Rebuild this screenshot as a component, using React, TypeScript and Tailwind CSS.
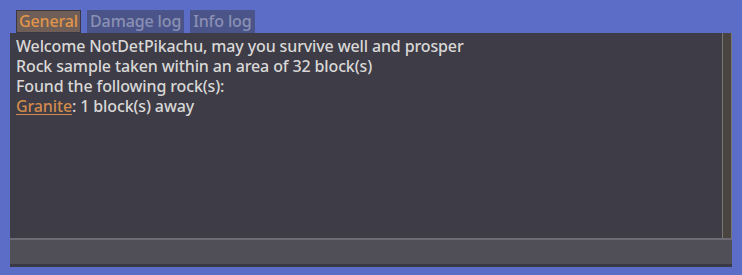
export default function App() {
  const lines = [
    "Welcome NotDetPikachu, may you survive well and prosper",
    "Rock sample taken within an area of 32 block(s)",
    "Found the following rock(s):",
  ];
  return (
    <div
      className="w-[742px] h-[275px] bg-[#5b6dc6] px-[10px] pt-[10px] flex flex-col tracking-[-0.13px]"
      style={{ fontFamily: '"Noto Sans", sans-serif' }}
    >
      {/* tabs */}
      <div className="flex gap-[6px] pl-[6px] h-[23px] items-end">
        <div className="h-[23px] px-[2px] bg-[#6e5e57] border border-[#3b3844] text-[#e0954a] text-[16px] leading-[21px] font-medium">
          General
        </div>
        <div className="h-[23px] px-[3px] bg-[#4b5488] text-[#8a90b4] text-[16px] leading-[23px] font-medium">
          Damage log
        </div>
        <div className="h-[23px] px-[3px] bg-[#4b5488] text-[#8a90b4] text-[16px] leading-[23px] font-medium">
          Info log
        </div>
      </div>

      {/* panel */}
      <div className="w-[722px] h-[234px] flex flex-col bg-[#3d3c47]">
        <div className="flex flex-1 min-h-0">
          <div className="flex-1 pl-[6px] pt-[3px] text-[16px] leading-[20px] text-[#d9d8d6] font-medium">
            {lines.map((l) => (
              <div key={l}>{l}</div>
            ))}
            <div>
              <span className="text-[#d28b4b] underline underline-offset-2">Granite</span>: 1 block(s) away
            </div>
          </div>
          <div className="w-[10px] bg-[#4a4440] border-l border-r border-[#7a7670]" />
        </div>
        <div className="h-[29px] bg-[#504f58] border-t-2 border-[#6d6c75] border-b-[3px] border-b-[#3a3946]" />
      </div>
    </div>
  );
}
